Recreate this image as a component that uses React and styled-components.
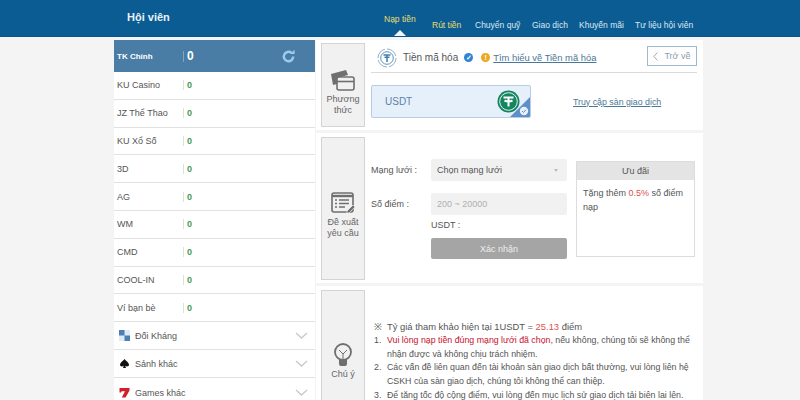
import React from 'react'
import styled, { createGlobalStyle } from 'styled-components'

const Global = createGlobalStyle`
  html, body { margin: 0; padding: 0; height: 400px; overflow: hidden; background: #f4f4f4; }
  body { font-family: "Liberation Sans", Arial, sans-serif; color: #444; }
  * { box-sizing: border-box; }
`

const Page = styled.div`
  width: 800px;
  height: 400px;
  overflow: hidden;
`

const Header = styled.header`
  height: 37px;
  background: #0c5c94;
  border-bottom: 1px solid #0a5488;
  display: flex;
  padding-left: 127px;
`

const Title = styled.div`
  width: 257px;
  padding-top: 11px;
  font-size: 11px;
  font-weight: bold;
  color: #e8f2f8;
`

const Nav = styled.nav`
  display: flex;
  align-items: flex-start;
`

const NavItem = styled.a`
  position: relative;
  font-size: 8.5px;
  white-space: nowrap;
  color: ${p => (p.$gold ? '#e9dc6d' : '#dbe8f1')};
  padding-top: ${p => (p.$active ? '14px' : '20px')};
  width: ${p => p.$w}px;
  ${p => p.$active && `
    &::after {
      content: '';
      position: absolute;
      left: 10px;
      top: 30px;
      border: 5px solid transparent;
      border-top: 0;
      border-bottom: 6px solid #f2f5f7;
      border-left-width: 6px;
      border-right-width: 6px;
    }
  `}
`

const Body = styled.div`
  display: flex;
  padding: 3px 0 0 114px;
`

const Sidebar = styled.aside`
  width: 201px;
  flex: none;
  background: #fff;
`

const MainRow = styled.div`
  height: 32px;
  background: #4a7da6;
  display: flex;
  align-items: center;
  padding-left: 3px;
  color: #fff;
`

const MainLabel = styled.span`
  width: 66px;
  font-size: 8px;
  font-weight: bold;
`

const MainValue = styled.span`
  flex: 1;
  font-size: 12px;
  font-weight: bold;
  padding-left: 3px;
  border-left: 1px solid #7fa6c4;
  line-height: 11px;
`

const Refresh = styled.svg`
  width: 15px;
  height: 15px;
  margin-right: 19px;
`

const Row = styled.div`
  height: 27.8px;
  display: flex;
  align-items: center;
  padding-left: 3px;
  border-bottom: 1px solid #e2e2e2;
  font-size: 9px;
  color: #555;
`

const RowLabel = styled.span`
  width: 66px;
`

const RowValue = styled.span`
  padding-left: 3px;
  border-left: 1px solid #d8e4d8;
  line-height: 10px;
  font-weight: bold;
  color: #4a9a52;
`

const GroupRow = styled(Row)`
  padding: 0 7px 0 5px;
  gap: 5px;
  height: ${p => p.$h || 28}px;
`

const GroupLabel = styled.span`
  flex: 1;
`

const GroupIcon = styled.svg`
  width: 11px;
  height: 11px;
  flex: none;
`

const Main = styled.main`
  width: 387px;
  margin-left: 1px;
  display: flex;
  flex-direction: column;
  gap: 3px;
`

const Section = styled.section`
  background: #fff;
  padding: ${p => p.$pt}px 0 3px 5px;
  display: flex;
  gap: 6px;
  height: ${p => p.$h}px;
  flex: none;
`

const Side = styled.div`
  width: 44px;
  flex: none;
  background: #f1f1f1;
  border: 1px solid #d4d4d4;
  display: flex;
  flex-direction: column;
  align-items: center;
  justify-content: center;
  padding-top: ${p => p.$pt || 0}px;
  font-size: 9px;
  line-height: 11px;
  text-align: center;
  color: #666;
`

const SideIcon = styled.svg`
  width: 26px;
  height: 26px;
  margin-bottom: 1px;
`

const MethodBody = styled.div`
  width: 326px;
`

const MethodHead = styled.div`
  height: 30px;
  border-bottom: 1px solid #dadada;
  display: flex;
  align-items: center;
  padding-left: 6px;
  font-size: 10px;
  color: #555;
  position: relative;
`

const CoinRing = styled.svg`
  width: 20px;
  height: 20px;
  margin-right: 6px;
  flex: none;
`

const Dot = styled.span`
  width: 9px;
  height: 9px;
  border-radius: 50%;
  background: ${p => p.$bg};
  color: #fff;
  font-size: 7px;
  line-height: 9px;
  font-weight: bold;
  text-align: center;
  margin-left: ${p => p.$ml}px;
  margin-right: 3px;
  flex: none;
`

const HelpLink = styled.a`
  color: #4a7896;
  font-size: 9.4px;
  text-decoration: underline;
`

const Back = styled.a`
  position: absolute;
  right: 0;
  top: 3px;
  width: 50px;
  height: 20px;
  border: 1px solid #9fb9cc;
  background: #fff;
  color: #8aa0b0;
  font-size: 9px;
  display: flex;
  align-items: center;
  justify-content: center;
  gap: 6px;
`

const MethodRow = styled.div`
  display: flex;
  align-items: center;
  margin-top: 12px;
`

const CoinCard = styled.div`
  position: relative;
  width: 160px;
  height: 33px;
  background: #e6f0fb;
  border: 1px solid #b7cde4;
  border-radius: 2px;
  padding-left: 13px;
  display: flex;
  align-items: center;
  font-size: 10px;
  color: #5b83a8;
  overflow: hidden;
`

const Tether = styled.svg`
  position: absolute;
  right: 10px;
  top: 4px;
  width: 23px;
  height: 23px;
`

const Corner = styled.svg`
  position: absolute;
  right: 0;
  bottom: 0;
  width: 20px;
  height: 20px;
`

const Exchange = styled.a`
  margin-left: 42px;
  font-size: 8.8px;
  color: #4a7896;
  text-decoration: underline;
`

const FormGrid = styled.div`
  display: flex;
  padding-top: 22px;
`

const FormCol = styled.div`
  width: 205px;
  flex: none;
`

const FormRow = styled.div`
  display: flex;
  align-items: center;
  height: 22px;
  margin-bottom: ${p => p.$mb || 0}px;
  font-size: 9px;
  color: #555;
`

const FormLabel = styled.span`
  width: 60px;
  flex: none;
`

const Select = styled.div`
  width: 136px;
  height: 22px;
  background: #f1f1f1;
  border-radius: 2px;
  display: flex;
  align-items: center;
  justify-content: space-between;
  padding: 0 9px 0 6px;
  color: #555;
`

const Caret = styled.span`
  border: 2.5px solid transparent;
  border-top: 3px solid #bbb;
  border-bottom: 0;
`

const Input = styled(Select)`
  color: #b0b0b0;
`

const Usdt = styled.div`
  margin: 4px 0 6px 60px;
  font-size: 9px;
  line-height: 13px;
  color: #555;
`

const Confirm = styled.button`
  display: block;
  margin-left: 60px;
  width: 136px;
  height: 21px;
  padding: 0;
  border: 0;
  border-radius: 2px;
  background: #a5a5a5;
  color: #eee;
  font: 9px "Liberation Sans", Arial, sans-serif;
`

const Promo = styled.div`
  width: 119px;
  height: 96px;
  margin-top: 2px;
  border: 1px solid #dcdcdc;
  flex: none;
`

const PromoHead = styled.div`
  height: 18px;
  background: #e4e4e4;
  text-align: center;
  line-height: 18px;
  font-size: 9px;
  color: #555;
`

const PromoText = styled.div`
  padding: 6px 6px;
  font-size: 9px;
  line-height: 14px;
  color: #555;
`

const Red = styled.span`
  color: ${p => p.$c || '#d9534f'};
`

const Notes = styled.div`
  padding-top: 30px;
  padding-left: 3px;
  width: 326px;
  line-height: 13.8px;
  color: #555;
`

const Note = styled.div`
  display: flex;
  font-size: ${p => p.$size || 8.8}px;
`

const NoteMark = styled.span`
  width: 13px;
  flex: none;
`

export default function App() {
  const accounts = ['KU Casino', 'JZ Thể Thao', 'KU Xổ Số', '3D', 'AG', 'WM', 'CMD', 'COOL-IN', 'Ví bạn bè']
  const chevron = (
    <svg width="13" height="7" viewBox="0 0 13 7" fill="none" stroke="#c9c9c9" strokeWidth="1.3"><path d="M1 1l5.5 5L12 1" /></svg>
  )
  return (
    <Page>
      <Global />
      <Header>
        <Title>Hội viên</Title>
        <Nav>
          <NavItem $gold $active $w={48}>Nạp tiền</NavItem>
          <NavItem $gold $w={43}>Rút tiền</NavItem>
          <NavItem $w={57}>Chuyển quỹ</NavItem>
          <NavItem $w={47}>Giao dịch</NavItem>
          <NavItem $w={56}>Khuyến mãi</NavItem>
          <NavItem $w={70}>Tư liệu hội viên</NavItem>
        </Nav>
      </Header>
      <Body>
        <Sidebar>
          <MainRow>
            <MainLabel>TK Chính</MainLabel>
            <MainValue>0</MainValue>
            <Refresh viewBox="0 0 16 16" fill="none" stroke="#9accec" strokeWidth="2.6">
              <path d="M13 8a5 5 0 1 1-1.8-3.8" />
              <path d="M9.5 5.2h5V0.8z" fill="#9accec" stroke="none" />
            </Refresh>
          </MainRow>
          {accounts.map(name => (
            <Row key={name}>
              <RowLabel>{name}</RowLabel>
              <RowValue>0</RowValue>
            </Row>
          ))}
          <GroupRow>
            <GroupIcon viewBox="0 0 11 11">
              <rect width="11" height="11" fill="#4c7fb5" />
              <rect x="5.5" width="5.5" height="5.5" fill="#dfeaf5" />
              <rect y="5.5" width="5.5" height="5.5" fill="#dfeaf5" />
            </GroupIcon>
            <GroupLabel>Đối Kháng</GroupLabel>
            {chevron}
          </GroupRow>
          <GroupRow>
            <GroupIcon viewBox="0 0 11 11">
              <path d="M5.5 1C7 3 10 4.5 10 6.7 10 8.3 8 9 6.2 7.8L7 10H4l.8-2.2C3 9 1 8.3 1 6.7 1 4.5 4 3 5.5 1z" fill="#111" />
            </GroupIcon>
            <GroupLabel>Sảnh khác</GroupLabel>
            {chevron}
          </GroupRow>
          <GroupRow $h={30}>
            <GroupIcon viewBox="0 0 11 11">
              <path d="M0.5 1h10v2.6L6.5 10.5H2.8L6 4.2H2.5L2 5.5H.5z" fill="#d0202a" />
            </GroupIcon>
            <GroupLabel>Games khác</GroupLabel>
            {chevron}
          </GroupRow>
        </Sidebar>
        <Main>
          <Section $h={90} $pt={3}>
            <Side $pt={12}>
              <SideIcon viewBox="0 0 26 26" fill="none">
                <path d="M1 7l15-4 2 5-11 3v6l-4 1z" fill="#6f6f6f" />
                <rect x="7" y="10" width="17" height="13" rx="2" stroke="#6f6f6f" strokeWidth="1.6" fill="#f1f1f1" />
                <path d="M7 14.5h17" stroke="#6f6f6f" strokeWidth="1.6" />
              </SideIcon>
              Phương<br />thức
            </Side>
            <MethodBody>
              <MethodHead>
                <CoinRing viewBox="0 0 20 20" fill="none">
                  <circle cx="10" cy="10" r="9" stroke="#8fb2cc" strokeWidth="1" strokeDasharray="12 2" />
                  <circle cx="10" cy="10" r="6.3" stroke="#5d93bb" strokeWidth="1" />
                  <path d="M6.5 7h7M10 7v7M7.5 9.2h5" stroke="#3f7fae" strokeWidth="1.5" />
                </CoinRing>
                Tiền mã hóa
                <Dot $bg="#2f82d4" $ml={6}>✓</Dot>
                <Dot $bg="#eda822" $ml={5}>!</Dot>
                <HelpLink>Tìm hiểu về Tiền mã hóa</HelpLink>
                <Back>
                  <svg width="5" height="9" viewBox="0 0 5 9" fill="none" stroke="#9ab" strokeWidth="1"><path d="M4.5.5L.8 4.5l3.7 4" /></svg>
                  Trở về
                </Back>
              </MethodHead>
              <MethodRow>
                <CoinCard>
                  USDT
                  <Tether viewBox="0 0 23 23" fill="none">
                    <circle cx="11.5" cy="11.5" r="11" fill="#14855f" />
                    <circle cx="11.5" cy="11.5" r="8.8" stroke="#e6f3ee" strokeWidth="1" />
                    <path d="M6.5 7.5h10M11.5 7.5v9M7.5 10.5c2 1 6 1 8 0" stroke="#fff" strokeWidth="2" />
                  </Tether>
                  <Corner viewBox="0 0 20 20">
                    <path d="M20 0v20H0z" fill="#5e8fc8" />
                    <circle cx="14" cy="14" r="4.2" fill="#e9f0f8" />
                    <path d="M12 14l1.5 1.5 2.5-2.8" fill="none" stroke="#5e8fc8" strokeWidth="1" />
                  </Corner>
                </CoinCard>
                <Exchange>Truy cập sàn giao dịch</Exchange>
              </MethodRow>
            </MethodBody>
          </Section>
          <Section $h={150} $pt={4}>
            <Side $pt={11}>
              <SideIcon viewBox="0 0 26 26" fill="none">
                <rect x="2" y="3" width="21" height="19" rx="2" stroke="#6f6f6f" strokeWidth="1.6" />
                <path d="M2 6h21" stroke="#6f6f6f" strokeWidth="2.4" />
                <path d="M5 10h2M9 10h10M5 13.5h2M9 13.5h10M5 17h2M9 17h6" stroke="#6f6f6f" strokeWidth="1.3" />
                <path d="M17 21l6-6 2 2-6 6h-2z" fill="#6f6f6f" stroke="#fff" strokeWidth=".6" />
              </SideIcon>
              Đề xuất<br />yêu cầu
            </Side>
            <FormGrid>
              <FormCol>
                <FormRow $mb={12}>
                  <FormLabel>Mạng lưới :</FormLabel>
                  <Select>Chọn mạng lưới<Caret /></Select>
                </FormRow>
                <FormRow>
                  <FormLabel>Số điểm :</FormLabel>
                  <Input>200 ~ 20000</Input>
                </FormRow>
                <Usdt>USDT :</Usdt>
                <Confirm>Xác nhận</Confirm>
              </FormCol>
              <Promo>
                <PromoHead>Ưu đãi</PromoHead>
                <PromoText>Tặng thêm <Red>0.5%</Red> số điểm nạp</PromoText>
              </Promo>
            </FormGrid>
          </Section>
          <Section $h={120} $pt={4}>
            <Side $pt={28}>
              <SideIcon viewBox="0 0 26 26" fill="none">
                <circle cx="13" cy="10" r="8" stroke="#6f6f6f" strokeWidth="1.8" />
                <path d="M9 8l4 4 4-4M13 12v5" stroke="#6f6f6f" strokeWidth="1" />
                <path d="M9 18h8v4a2 2 0 0 1-2 2h-4a2 2 0 0 1-2-2z" fill="#6f6f6f" />
              </SideIcon>
              Chú ý
            </Side>
            <Notes>
              <Note $size={9.4}><NoteMark>※</NoteMark><span>Tỷ giá tham khảo hiện tại 1USDT = <Red>25.13</Red> điểm</span></Note>
              <Note><NoteMark>1.</NoteMark><span><Red $c="#c8102e">Vui lòng nạp tiền đúng mạng lưới đã chọn</Red>, nếu không, chúng tôi sẽ không thể nhận được và không chịu trách nhiệm.</span></Note>
              <Note><NoteMark>2.</NoteMark><span>Các vấn đề liên quan đến tài khoản sàn giao dịch bất thường, vui lòng liên hệ CSKH của sàn giao dịch, chúng tôi không thể can thiệp.</span></Note>
              <Note><NoteMark>3.</NoteMark><span>Để tăng tốc độ cộng điểm, vui lòng đến mục lịch sử giao dịch tải biên lai lên.</span></Note>
            </Notes>
          </Section>
        </Main>
      </Body>
    </Page>
  )
}
